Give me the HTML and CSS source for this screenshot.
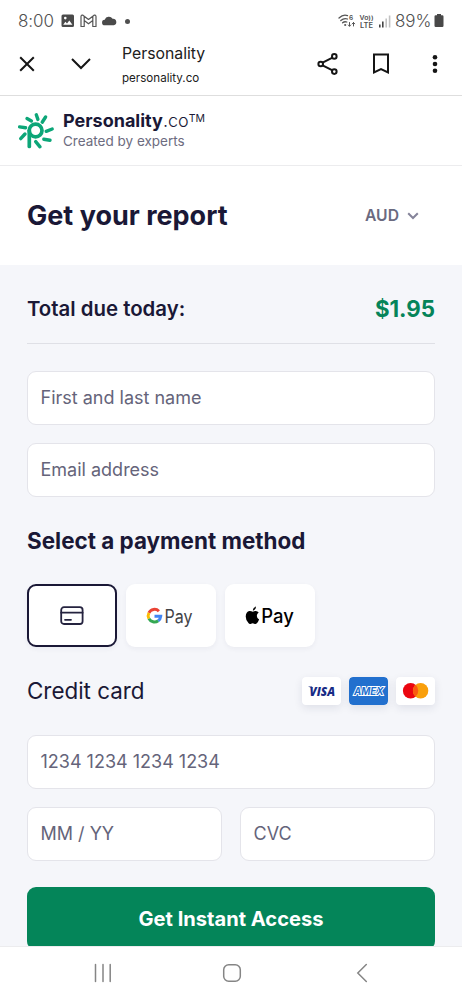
FILE: index.html
```html
<!DOCTYPE html>
<html lang="en">
<head>
<meta charset="utf-8">
<title>Personality</title>
<link rel="stylesheet" href="styles.css">
</head>
<body>
<div class="screen">
  <header class="status">
    <span class="clock">8:00</span>
    <svg class="status-left" width="64" height="16" viewBox="0 0 64 16">
      <path fill="#4a4a4a" fill-rule="evenodd" d="M2 1.500h9.500a1.500 1.500 0 0 1 1.500 1.500v9.500a1.500 1.500 0 0 1-1.500 1.500H2A1.500 1.500 0 0 1 .5 12.500V3A1.500 1.500 0 0 1 2 1.500zM2.200 11.800h9.200L8.300 7.500 6 10.500 4.400 8.800zM4.300 3.800a1.300 1.300 0 1 0 0 2.600 1.300 1.300 0 0 0 0-2.600z"/>
      <path fill="none" stroke="#555" stroke-width="1.200" stroke-linejoin="round" d="M20 13.500V3.500q.2-1.800 1.900-1.300L27.500 6.500l5.600-4.300q1.700-.5 1.900 1.300V13.500h-3.200V7.500l-4.300 3.300-4.300-3.300V13.500zM23.200 7.500V3.500M31.800 7.500V3.500"/>
      <path fill="#4a4a4a" d="M44 12.300a2.800 2.800 0 0 1-.3-5.600 4.500 4.500 0 0 1 7.900-.9 3.300 3.300 0 0 1 1.100 6.500z"/>
    </svg>
    <span class="status-dot"></span>
    <svg class="status-right" width="55" height="17" viewBox="0 0 55 17">
      <g fill="none" stroke="#555" stroke-width="1.300" stroke-linecap="round">
        <path d="M1 5q4.300-4 8.500-2.300M2.800 7.500Q6 4.800 9.500 6M4.600 9.800Q6.500 8.200 8.800 9"/>
        <path stroke-width="1" d="M11.500 9.500v3.500M10.300 12l1.200 1.300 1.200-1.300M15.500 13V9.500M14.300 10.800l1.200-1.300 1.200 1.300"/>
      </g>
      <circle cx="7.200" cy="12" r="1.100" fill="#555"/>
      <text class="tiny" x="11" y="7.300" font-size="6.500">6</text>
      <text class="tiny" x="21.500" y="6.800" font-size="6" textLength="14" lengthAdjust="spacingAndGlyphs">Vo))</text>
      <text class="tiny" x="22" y="14.800" font-size="7" textLength="13" lengthAdjust="spacingAndGlyphs">LTE</text>
      <path fill="#444" d="M41 11.500h1.600v3H41zM44 8.500h1.600v6H44z"/>
      <path fill="#c2c2c2" d="M47.400 5.500h1.600v9h-1.600zM50.800 2.500h1.600v12h-1.600z"/>
    </svg>
    <span class="battery">89%</span>
    <svg class="cell" width="10" height="14" viewBox="0 0 10 14"><path fill="#484848" d="M3 0h4v1.200h1.300q1.200 0 1.200 1.200v9.400q0 1.200-1.200 1.200H1.700Q.5 13 .5 11.800V2.400q0-1.200 1.200-1.200H3z"/></svg>
  </header>

  <div class="toolbar">
    <svg class="close" width="18" height="18" viewBox="0 0 18 18"><path d="M2.200 2.200l13.600 13.600M15.800 2.200L2.200 15.800"/></svg>
    <svg class="collapse" width="22" height="14" viewBox="0 0 22 14"><path d="M2 2l9 9 9-9"/></svg>
    <div class="page-id">
      <div class="page-title">Personality</div>
      <div class="page-host">personality.co</div>
    </div>
    <svg class="share" width="22" height="24" viewBox="0 0 22 24"><path d="M5.600 10.700l9.900-5.100M5.600 13.300l9.900 5.100"/><circle cx="3.700" cy="12" r="2.300"/><circle cx="17.300" cy="4.400" r="2.300"/><circle cx="17.300" cy="19.600" r="2.300"/></svg>
    <svg class="bookmark" width="18" height="22" viewBox="0 0 18 22"><path d="M2 1.500h14v18l-7-3.300-7 3.300z"/></svg>
    <svg class="more" width="6" height="20" viewBox="0 0 6 20"><circle cx="3" cy="3.200" r="2.300"/><circle cx="3" cy="10" r="2.300"/><circle cx="3" cy="16.800" r="2.300"/></svg>
  </div>

  <div class="brand">
    <svg class="brand-mark" width="38" height="38" viewBox="17 112 38 38">
      <g fill="none" stroke="#0ca678" stroke-width="3.400" stroke-linecap="round">
        <circle cx="35.600" cy="130.500" r="6.400" stroke-width="3.700"/>
        <path d="M29.300 130.500v16" stroke-width="3.700"/>
        <path d="M36.300 114.800l1.600 4.600M45.600 117l-3.400 5.200M52.200 129l-6 2.300M50 140.300l-6.200-1M40 146.800l-4.300-5.200M19.600 126.900l6 .8M20.700 138.600l4.300-4.600M27 118.500l4.400 2.500"/>
      </g>
    </svg>
    <div>
      <div class="brand-name"><b>Personality</b>.co<span class="tm">TM</span></div>
      <div class="brand-sub">Created by experts</div>
    </div>
  </div>

  <div class="headline">
    <h1>Get your report</h1>
    <div class="currency">AUD
      <svg width="12" height="8" viewBox="0 0 12 8"><path d="M1.200 1.200L6 6l4.800-4.800"/></svg>
    </div>
  </div>

  <main class="checkout">
    <div class="total"><span class="total-label">Total due today:</span><span class="price">$1.95</span></div>
    <div class="field first">First and last name</div>
    <div class="field">Email address</div>
    <h2>Select a payment method</h2>
    <div class="methods">
      <div class="method selected">
        <svg width="24" height="20" viewBox="0 0 24 20"><rect x="1.200" y="1.200" width="21.400" height="16.800" rx="2.800"/><path d="M1.200 6.700h21.400M5 13.800h6"/></svg>
      </div>
      <div class="method">
        <svg width="52" height="30" viewBox="-2 -5 52 30">
          <g fill="none" stroke-width="3">
            <path stroke="#ea4335" d="M1.900 6.900A6.200 6.200 0 0 1 11.900 5.200"/>
            <path stroke="#fbbc04" d="M1.900 12.600A6.200 6.200 0 0 1 1.900 6.900"/>
            <path stroke="#34a853" d="M11.200 14.700A6.200 6.200 0 0 1 1.900 12.600"/>
            <path stroke="#4285f4" d="M7.500 10.300h6.200A6.200 6.200 0 0 1 11.200 14.700"/>
          </g>
          <text class="gpay" x="17.500" y="17" textLength="28" lengthAdjust="spacingAndGlyphs">Pay</text>
        </svg>
      </div>
      <div class="method">
        <svg width="56" height="32" viewBox="-3 -5 56 32">
          <path transform="translate(-.8 .3) scale(1.080)" d="M10.900 1q.2 2.800-2.800 4Q7.700 2.300 10.900 1zM8 5.900q1.300-.8 2.700-.7 1.700.1 2.700 1.500-1.800 1.200-1.700 3.300.1 2.300 2.100 3.200-.8 2.200-2.100 3.500-1 .9-2.400.3-1.500-.6-2.900 0-1.400.6-2.300-.3Q1.400 14 1.400 10.300q.2-4.500 3.500-5.100 1.500-.1 3.100.7z"/>
          <text class="apay" x="16.300" y="17.800" textLength="32.500" lengthAdjust="spacingAndGlyphs">Pay</text>
        </svg>
      </div>
    </div>
    <div class="card-row">
      <span class="card-title">Credit card</span>
      <div class="badges">
        <svg class="badge" width="39" height="28" viewBox="0 0 39 28"><rect width="39" height="28" rx="4" fill="#fff"/><path fill="#172b85" d="M6 9.500h4l.8 2z"/><text class="visa" x="7.500" y="18.500" textLength="25.500" lengthAdjust="spacingAndGlyphs">VISA</text></svg>
        <svg class="badge" width="39" height="28" viewBox="0 0 39 28"><rect width="39" height="28" rx="4" fill="#2270ce"/><text class="amex" x="5" y="17.800" textLength="29.500" lengthAdjust="spacingAndGlyphs">AMEX</text></svg>
        <svg class="badge" width="39" height="28" viewBox="0 0 39 28"><rect width="39" height="28" rx="4" fill="#fff"/><circle cx="14.600" cy="13.700" r="7.700" fill="#eb0610"/><circle cx="24.600" cy="13.700" r="7.700" fill="#f99f0b"/><path fill="#fa5a10" d="M19.600 7.850a7.700 7.700 0 0 1 0 11.700 7.700 7.700 0 0 1 0-11.700z"/></svg>
      </div>
    </div>
    <div class="field">1234 1234 1234 1234</div>
    <div class="pair">
      <div class="field">MM / YY</div>
      <div class="field">CVC</div>
    </div>
    <div class="cta">Get Instant Access</div>
  </main>

  <nav class="nav">
    <svg width="18" height="20" viewBox="0 0 18 20"><path d="M1.500 1.500v17M9 1.500v17M16.200 1.500v17"/></svg>
    <svg class="home" width="20" height="20" viewBox="0 0 20 20"><rect x="1.700" y="1.700" width="16.600" height="16.600" rx="5"/></svg>
    <svg width="12" height="20" viewBox="0 0 12 20"><path d="M10.300 1.500L1.800 10l8.500 8.500"/></svg>
  </nav>
</div>
</body>
</html>
```

FILE: styles.css
```css
* { box-sizing: border-box; }
body { margin: 0; background: #fff; font-family: Inter, "Liberation Sans", sans-serif; color: #1a1836; }
svg { display: block; flex: none; }
h1, h2 { margin: 0; }
.screen { width: 462px; height: 1000px; overflow: hidden; display: flex; flex-direction: column; white-space: nowrap; }

.status { height: 42px; flex: none; display: flex; align-items: center; padding: 0 18px; color: #505050; }
.clock { width: 43px; font-size: 17px; letter-spacing: -.1px; font-weight: 300; }
.status-left { width: 64px; }
.status-dot { width: 5px; height: 5px; border-radius: 50%; background: #505050; }
.status-right { margin-left: auto; }
.tiny { font-family: Inter, sans-serif; font-weight: 600; fill: #505050; }
.battery { width: 38px; margin-left: 2px; margin-right: 1px; font-size: 17px; letter-spacing: -.1px; font-weight: 300; }

.toolbar { height: 54px; flex: none; display: flex; align-items: center; padding: 0 24px 10px 18px; border-bottom: 1px solid #dedede; }
.toolbar svg { fill: none; stroke: #151515; stroke-width: 2; }
.collapse { margin-left: 34px; }
.page-id { margin-left: 30px; padding-top: 5px; color: #202020; font-weight: 400; }
.page-title { font-size: 15.800px; line-height: 24px; }
.page-host { font-size: 11.600px; line-height: 24px; }
.share { margin-left: auto; }
.bookmark { margin-left: 33px; }
.more { margin-left: 42px; }
.toolbar .more { fill: #151515; stroke: none; }

.brand { height: 70px; flex: none; display: flex; align-items: center; padding: 0 17px; gap: 8px; border-bottom: 1px solid #ececee; }
.brand-name { font-size: 18px; line-height: 20px; font-weight: 300; }
.brand-name b { font-weight: 700; }
.tm { font-size: 10.500px; line-height: 1; vertical-align: 5px; font-weight: 400; }
.brand-sub { font-size: 13.500px; line-height: 20px; color: #6d6c80; }

.headline { height: 99px; flex: none; display: flex; align-items: center; justify-content: space-between; padding: 0 43px 0 27px; }
h1 { font-size: 27px; font-weight: 700; line-height: 36px; }
.currency { display: flex; align-items: center; gap: 8px; font-size: 15.700px; font-weight: 600; color: #6b6a80; }
.currency svg { fill: none; stroke: #85849a; stroke-width: 2; }

.checkout { height: 681px; flex: none; overflow: hidden; padding: 0 27px; background: #f5f6fa; }
.total { height: 79px; padding-top: 8px; display: flex; align-items: center; justify-content: space-between; border-bottom: 1px solid #dfe0e6; }
.total-label { font-size: 20.400px; font-weight: 600; }
.price { font-size: 22.300px; font-weight: 700; color: #058459; }
.field { height: 54px; margin-bottom: 18px; padding: 0 12.500px 1px; display: flex; align-items: center; background: #fff; border: 1px solid #e4e4ea; border-radius: 9px; font-size: 18px; color: #65647a; }
.first { margin-top: 27px; }
h2 { height: 69px; line-height: 51px; font-size: 22.450px; font-weight: 700; }
.methods { display: flex; gap: 9px; }
.method { width: 90px; height: 63px; display: flex; align-items: center; justify-content: center; background: #fff; border-radius: 9px; box-shadow: 0 2px 5px rgba(30, 35, 80, .05); }
.selected { border: 2px solid #1a1836; }
.selected svg { fill: none; stroke: #25233f; stroke-width: 1.800; stroke-linecap: round; }
.gpay { font-family: Inter, sans-serif; font-size: 18px; fill: #424347; }
.apay { font-family: Inter, sans-serif; font-size: 19.500px; font-weight: 500; fill: #000; }
.card-row { height: 88px; display: flex; align-items: center; justify-content: space-between; }
.card-title { padding-bottom: 2px; font-size: 22.400px; }
.badges { display: flex; gap: 8px; }
.badge { border-radius: 4px; box-shadow: 0 3px 8px rgba(30, 35, 80, .1); }
.visa { font-family: "Open Sans", sans-serif; font-size: 13px; font-weight: 800; font-style: italic; fill: #172b85; }
.amex { font-family: Inter, sans-serif; font-size: 10.500px; font-weight: 700; font-style: italic; fill: #2270ce; stroke: #fff; stroke-width: 2; paint-order: stroke; }
.pair { display: flex; gap: 18px; }
.pair .field { flex: 1; margin-bottom: 26px; }
.cta { height: 63px; display: flex; align-items: center; justify-content: center; background: #048559; border-radius: 9px; color: #fff; font-size: 20.100px; font-weight: 700; }

.nav { height: 54px; flex: none; display: flex; align-items: center; justify-content: space-between; padding: 0 94px 2px; border-top: 1px solid #ececee; }
.nav svg { fill: none; stroke: #858585; stroke-width: 1.500; stroke-linecap: round; }
.nav .home { margin-right: 4px; }
```
